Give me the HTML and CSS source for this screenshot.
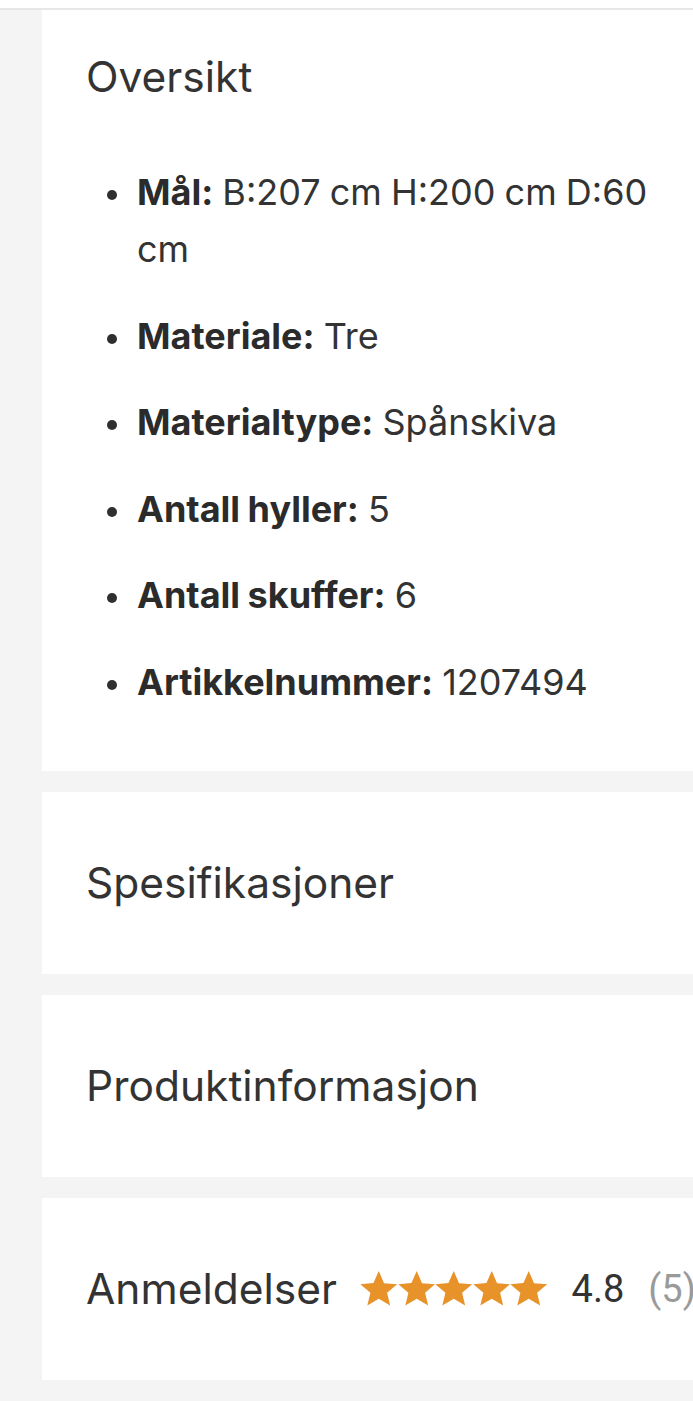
FILE: index.html
```html
<!DOCTYPE html>
<html lang="no">
<head>
<meta charset="utf-8">
<title>Produkt</title>
<link rel="stylesheet" href="styles.css">
</head>
<body>
<div class="topbar"></div>
<main class="page">
  <section class="card card-open">
    <h2 class="card-title">Oversikt</h2>
    <ul class="facts">
      <li><span><b>Mål:</b> B:207 cm H:200 cm D:60 cm</span></li>
      <li><span><b>Materiale:</b> Tre</span></li>
      <li><span><b>Materialtype:</b> Spånskiva</span></li>
      <li><span><b>Antall hyller:</b> 5</span></li>
      <li><span><b>Antall skuffer:</b> 6</span></li>
      <li><span><b>Artikkelnummer:</b> 1207494</span></li>
    </ul>
  </section>
  <section class="card card-closed">
    <h2 class="card-title">Spesifikasjoner</h2>
  </section>
  <section class="card card-closed">
    <h2 class="card-title">Produktinformasjon</h2>
  </section>
  <section class="card card-closed">
    <h2 class="card-title">Anmeldelser</h2>
    <div class="rating">
      <span class="stars">
        <svg viewBox="1 1 22 22" class="star"><path d="M12 1.6l3.1 7.1 7.7.6-5.9 5 1.8 7.5L12 17.8l-6.7 4 1.8-7.5-5.9-5 7.7-.6z"/></svg>
        <svg viewBox="1 1 22 22" class="star"><path d="M12 1.6l3.1 7.1 7.7.6-5.9 5 1.8 7.5L12 17.8l-6.7 4 1.8-7.5-5.9-5 7.7-.6z"/></svg>
        <svg viewBox="1 1 22 22" class="star"><path d="M12 1.6l3.1 7.1 7.7.6-5.9 5 1.8 7.5L12 17.8l-6.7 4 1.8-7.5-5.9-5 7.7-.6z"/></svg>
        <svg viewBox="1 1 22 22" class="star"><path d="M12 1.6l3.1 7.1 7.7.6-5.9 5 1.8 7.5L12 17.8l-6.7 4 1.8-7.5-5.9-5 7.7-.6z"/></svg>
        <svg viewBox="1 1 22 22" class="star"><path d="M12 1.6l3.1 7.1 7.7.6-5.9 5 1.8 7.5L12 17.8l-6.7 4 1.8-7.5-5.9-5 7.7-.6z"/></svg>
      </span>
      <span class="score">4.8</span>
      <span class="count">(5)</span>
    </div>
  </section>
</main>
</body>
</html>
```

FILE: styles.css
```css
html, body {
  margin: 0;
  padding: 0;
  background: #f4f4f4;
  overflow: hidden;
}
body {
  font-family: Inter, "Noto Sans", sans-serif;
  color: #333333;
  width: 693px;
  height: 1401px;
}
.topbar {
  height: 8px;
  background: #ffffff;
  border-bottom: 2px solid #e7e7e7;
}
.page {
  display: flex;
  flex-direction: column;
  gap: 21px;
  padding-left: 42px;
}
.card {
  background: #ffffff;
  padding: 0 10px 0 44px;
}
.card-open {
  padding-top: 42px;
  padding-bottom: 60px;
}
.card-closed {
  height: 182px;
  display: flex;
  align-items: center;
  gap: 23px;
}
.card-title {
  margin: 0;
  font-size: 42.5px;
  line-height: 50px;
  font-weight: 400;
  color: #333333;
  white-space: nowrap;
}
.facts {
  list-style: none;
  margin: 62px 0 0;
  padding: 0 0 0 21px;
  display: flex;
  flex-direction: column;
  gap: 29.5px;
  font-size: 36px;
  line-height: 57px;
  word-spacing: -1px;
  color: #333333;
}
.facts li {
  display: grid;
  grid-template-columns: 30px 1fr;
  align-items: start;
}
.facts li::before {
  content: "";
  width: 10px;
  height: 10px;
  margin-top: 26px;
  border-radius: 50%;
  background: #2f2f2f;
}
.facts b {
  font-weight: 700;
  color: #2b2b2b;
}
.rating {
  display: flex;
  align-items: center;
  white-space: nowrap;
  font-family: Roboto, "Liberation Sans", sans-serif;
  font-size: 38px;
}
.stars {
  display: flex;
  gap: 0;
  margin-right: 24px;
}
.star {
  width: 37.5px;
  height: 37.5px;
  fill: #e8922a;
}
.score {
  color: #333333;
  margin-right: 24px;
}
.count {
  color: #9a9a9a;
}
```
